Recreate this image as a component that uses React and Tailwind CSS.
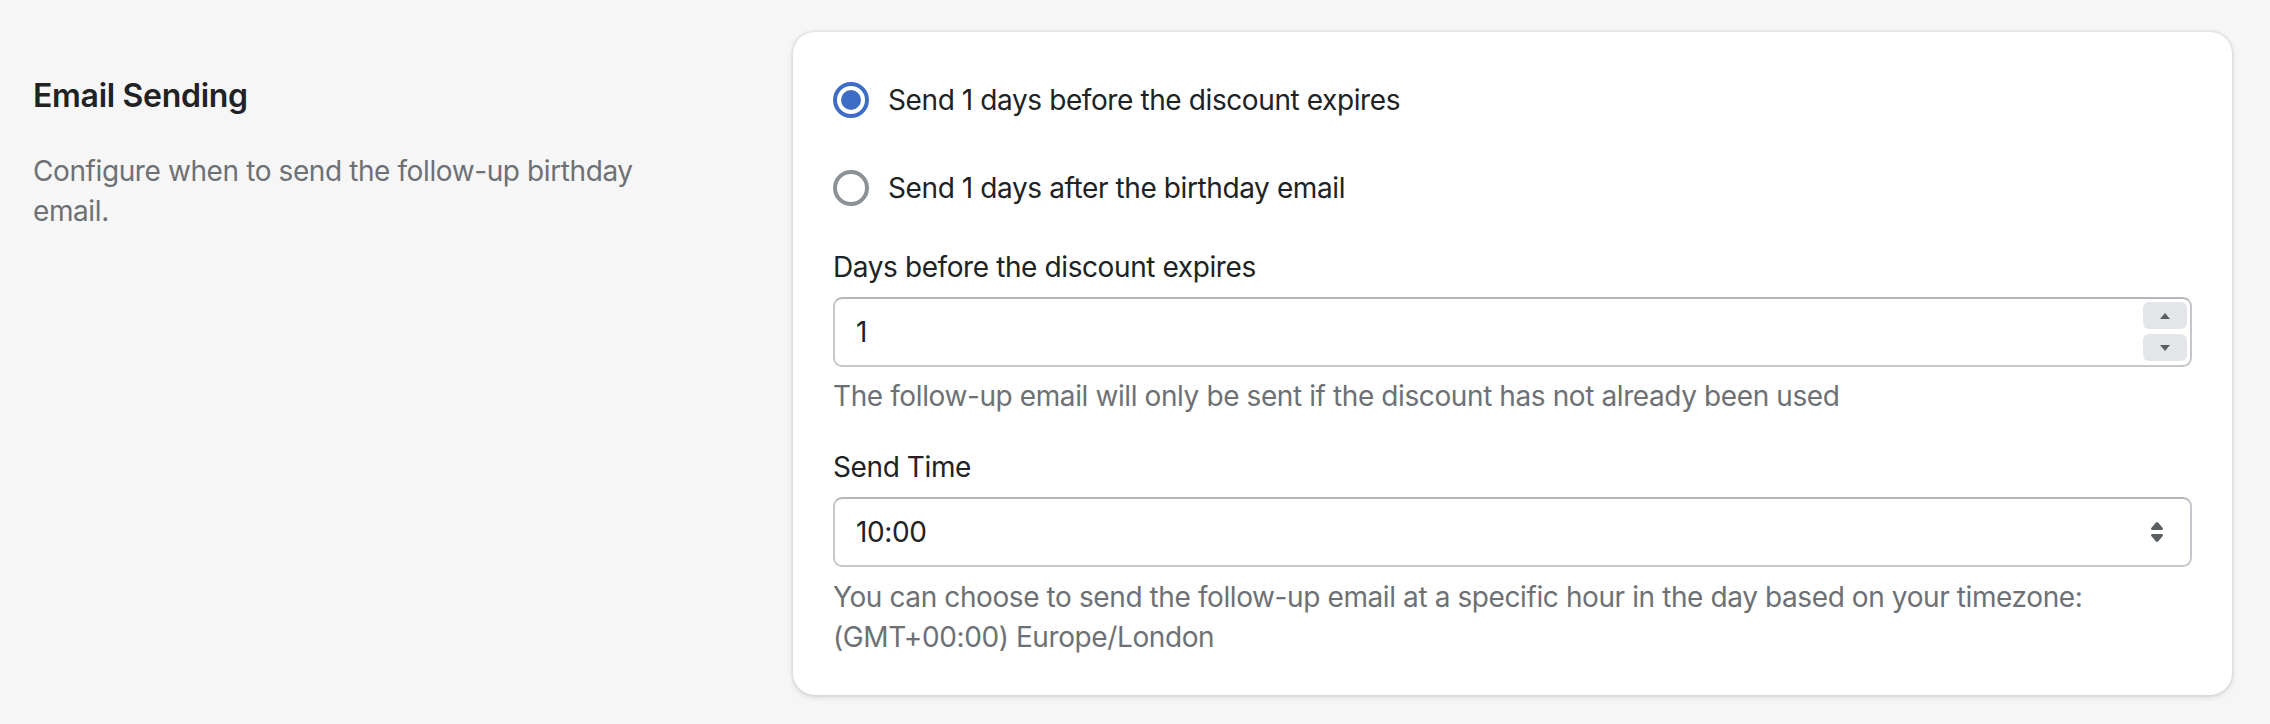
import React from "react";

function Radio({ checked, label }) {
  return (
    <div className="flex h-[56px] items-center">
      <span
        className={
          checked
            ? "flex h-[36px] w-[36px] shrink-0 items-center justify-center rounded-full border-[4px] border-[#3e6dc5] bg-white"
            : "flex h-[36px] w-[36px] shrink-0 items-center justify-center rounded-full border-[4px] border-[#8c9196] bg-white"
        }
      >
        {checked && <span className="h-[20px] w-[20px] rounded-full bg-[#3e6dc5]" />}
      </span>
      <span className="ml-[19px] text-[28px] leading-[40px] text-[#202223]">{label}</span>
    </div>
  );
}

function SelectArrows() {
  return (
    <svg viewBox="0 0 20 20" className="h-[40px] w-[40px]" fill="#5c5f62">
      <path d="M7.676 9h4.648c.563 0 .879-.603.53-1.014l-2.323-2.746a.708.708 0 0 0-1.062 0l-2.324 2.746c-.347.411-.032 1.014.531 1.014Zm4.648 2h-4.648c-.563 0-.878.603-.53 1.014l2.323 2.746c.27.32.792.32 1.062 0l2.323-2.746c.349-.411.033-1.014-.53-1.014Z" />
    </svg>
  );
}

export default function App() {
  return (
    <div className="min-h-screen bg-[#f6f6f7] font-['Inter',sans-serif] tracking-[-0.4px]">
      <div className="flex pl-[33px] pr-[38px] pt-[32px]">
        <div className="w-[760px] shrink-0 pt-[44px]">
          <h2 className="text-[32px] font-semibold leading-[40px] tracking-[-0.3px] text-[#202223]">Email Sending</h2>
          <p className="mt-[35px] w-[640px] text-[28px] leading-[40px] text-[#6d7175]">
            Configure when to send the follow-up birthday email.
          </p>
        </div>

        <div className="flex-1 rounded-[22px] bg-white px-[40px] pb-[38px] pt-[40px] shadow-[0_0_0_2px_rgba(63,63,68,0.05),0_2px_6px_0_rgba(63,63,68,0.15)]">
          <div className="flex flex-col gap-[32px]">
            <Radio checked label="Send 1 days before the discount expires" />
            <Radio label="Send 1 days after the birthday email" />
          </div>

          <div className="mt-[31px] text-[28px] leading-[40px] text-[#202223]">Days before the discount expires</div>
          <div className="mt-[10px] flex h-[70px] items-stretch rounded-[9px] border-[2px] border-[#c4c7cb] border-t-[#b3b7bb] bg-white">
            <div className="flex flex-1 items-center pl-[21px] text-[28px] leading-[40px] text-[#202223]">1</div>
            <div className="flex flex-col gap-[5px] py-[3px] pr-[3px]">
              <div className="flex h-[27px] w-[44px] items-center justify-center rounded-[6px] bg-[#e4e5e7]">
                <svg viewBox="0 0 10 6" className="h-[6px] w-[10px]" fill="#5c5f62">
                  <path d="M0 6 L5 0 L10 6 Z" />
                </svg>
              </div>
              <div className="flex h-[27px] w-[44px] items-center justify-center rounded-[6px] bg-[#e4e5e7]">
                <svg viewBox="0 0 10 6" className="h-[6px] w-[10px]" fill="#5c5f62">
                  <path d="M0 0 L10 0 L5 6 Z" />
                </svg>
              </div>
            </div>
          </div>
          <p className="mt-[9px] text-[28px] leading-[40px] text-[#6d7175]">
            The follow-up email will only be sent if the discount has not already been used
          </p>

          <div className="mt-[31px] text-[28px] leading-[40px] text-[#202223]">Send Time</div>
          <div className="mt-[10px] flex h-[70px] items-center justify-between rounded-[9px] border-[2px] border-[#c4c7cb] border-t-[#b3b7bb] bg-white pl-[21px] pr-[13px]">
            <span className="text-[28px] leading-[40px] text-[#202223]">10:00</span>
            <SelectArrows />
          </div>
          <p className="mt-[10px] text-[28px] leading-[40px] text-[#6d7175]">
            You can choose to send the follow-up email at a specific hour in the day based on your timezone:
            <br />
            (GMT+00:00) Europe/London
          </p>
        </div>
      </div>
    </div>
  );
}
